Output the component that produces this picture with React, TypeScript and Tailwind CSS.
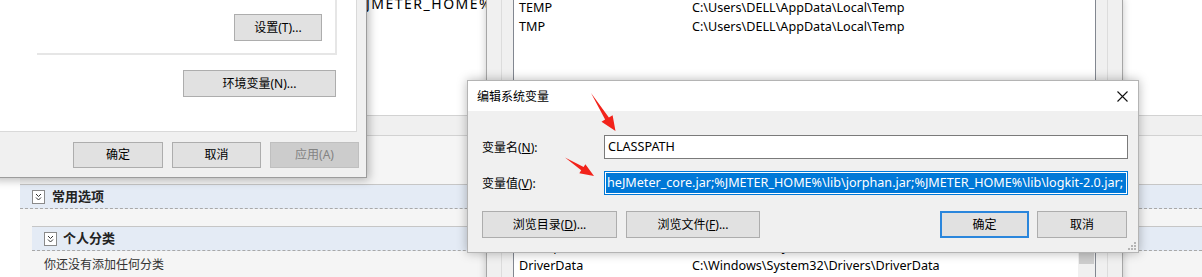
import React from 'react';

const FONT = "font-['Noto_Sans','Noto_Sans_CJK_SC',sans-serif]";

type Variant = 'normal' | 'default' | 'disabled';

function WinButton({ children, className = '', variant = 'normal' }: { children: React.ReactNode; className?: string; variant?: Variant }) {
    const look =
        variant === 'disabled'
            ? 'border border-[#bfbfbf] bg-[#cccccc] text-[#838383]'
            : variant === 'default'
              ? 'border-2 border-[#2a86dc] bg-[#e1e1e1] text-black'
              : 'border border-[#adadad] bg-[#e1e1e1] text-black';
    return <div className={`flex shrink-0 items-center justify-center text-[12px] ${look} ${className}`}>{children}</div>;
}

function Toggle() {
    return (
        <span className="flex h-[14px] w-[13px] items-center justify-center border border-[#8a8a8a] bg-white">
            <svg width="7" height="8" viewBox="0 0 7 8">
                <path d="M1 1l2.5 2.5L6 1M1 4.5l2.5 2.5L6 4.5" fill="none" stroke="#333" strokeWidth="1" />
            </svg>
        </span>
    );
}

function Row({ name, value }: { name: string; value: string }) {
    return (
        <div className="flex h-[19px] items-center whitespace-nowrap text-[12.6px] text-black">
            <span className="w-[178px] pl-[5px]">{name}</span>
            <span>{value}</span>
        </div>
    );
}

export default function App() {
    return (
        <div className={`relative h-[277px] w-[1202px] overflow-hidden bg-white ${FONT}`}>
            {/* page behind the windows */}
            <div className="flex h-full flex-col">
                <div className="h-[115px] shrink-0 bg-white" />
                <div className="h-[21px] shrink-0 border-y border-[#d2d2d2] bg-[#f0f0f0]" />
                <div className="ml-[20px] flex flex-1 flex-col bg-[#f5f5f5] pt-[48px]">
                    <div className="flex h-[25px] items-center gap-[7px] border-y border-t-[#c6c6c6] border-b-[#a8a8a8] bg-[#e4ebf5] pl-[12px] [border-bottom-style:dashed]">
                        <Toggle />
                        <span className="text-[13px] font-bold text-[#222]">常用选项</span>
                    </div>
                    <div className="ml-[12px] mt-[17px] flex h-[25px] items-center gap-[6px] border-y border-t-[#c6c6c6] border-b-[#a8a8a8] bg-[#e4ebf5] pl-[12px] [border-bottom-style:dashed]">
                        <Toggle />
                        <span className="text-[13px] font-bold text-[#222]">个人分类</span>
                    </div>
                    <div className="flex h-[28px] items-center pl-[24px] text-[12px] text-[#333]">你还没有添加任何分类</div>
                </div>
            </div>

            {/* list text of a window further back */}
            <div className="absolute left-[366px] top-[-5px] w-[120px] overflow-hidden whitespace-nowrap text-[14px] leading-[17px] tracking-[1.5px] text-black">
                JMETER_HOME%\lib
            </div>

            {/* 环境变量 window */}
            <div className="absolute left-[486px] top-[-2px] h-[300px] w-[637px] border-x border-[#a6a6a6] bg-[#f0f0f0] px-[14px] shadow-[0_0_8px_rgba(0,0,0,0.22)]">
                <div className="flex h-full flex-col border-x border-[#dcdcdc] px-[11px]">
                    <div className="h-[142px] border-x border-b border-[#828790] bg-white pt-[1px]">
                        <Row name="TEMP" value={String.raw`C:\Users\DELL\AppData\Local\Temp`} />
                        <Row name="TMP" value={String.raw`C:\Users\DELL\AppData\Local\Temp`} />
                    </div>
                    <div className="mt-[60px] flex flex-1 border border-[#828790] bg-white">
                        <div className="flex-1 pt-[37px]">
                            <Row name="ComSpec" value={String.raw`C:\WINDOWS\system32\cmd.exe`} />
                            <Row name="DriverData" value={String.raw`C:\Windows\System32\Drivers\DriverData`} />
                        </div>
                        <div className="w-[17px] bg-[#f0f0f0] pt-[52px]">
                            <div className="mx-[1px] h-[11px] bg-[#cdcdcd]" />
                        </div>
                    </div>
                </div>
            </div>

            {/* 系统属性 window */}
            <div className="absolute left-[-10px] top-[-20px] flex h-[198px] w-[377px] flex-col border border-[#9c9c9c] bg-[#f0f0f0] shadow-[2px_2px_9px_rgba(0,0,0,0.28)]">
                <div className="mr-[9px] flex h-[151px] flex-col items-end border border-[#d9d9d9] bg-white">
                    <div className="mr-[19px] flex h-[73px] w-[300px] items-end justify-end border-b-2 border-r-2 border-[#e6e6e6] pb-[12px] pr-[13px]">
                        <WinButton className="h-[27px] w-[88px]">设置(T)...</WinButton>
                    </div>
                    <WinButton className="mr-[20px] mt-[15px] h-[27px] w-[153px]">环境变量(N)...</WinButton>
                </div>
                <div className="mr-[7px] mt-[10px] flex justify-end gap-[9px]">
                    <WinButton className="h-[26px] w-[90px]">确定</WinButton>
                    <WinButton className="h-[26px] w-[89px]">取消</WinButton>
                    <WinButton variant="disabled" className="h-[26px] w-[89px]">
                        应用(A)
                    </WinButton>
                </div>
            </div>

            {/* 编辑系统变量 dialog */}
            <div className="absolute left-[467px] top-[80px] flex h-[173px] w-[672px] flex-col border border-[#b4b4b4] bg-[#f0f0f0] shadow-[0_0_10px_rgba(0,0,0,0.28)]">
                <div className="flex h-[30px] shrink-0 items-center justify-between bg-white pl-[9px] pr-[10px] pt-[1px]">
                    <span className="text-[12px] text-black">编辑系统变量</span>
                    <svg width="11" height="11" viewBox="0 0 11 11">
                        <path d="M0.5 0.5l10 10M10.5 0.5l-10 10" stroke="#111" strokeWidth="1.1" />
                    </svg>
                </div>
                <div className="flex flex-1 flex-col pl-[14px] pr-[10px] pt-[24px]">
                    <div className="flex h-[24px] items-center">
                        <span className="w-[122px] pt-[1px] text-[12px] text-black">
                            变量名(<span className="underline">N</span>):
                        </span>
                        <div className="flex h-[24px] w-[524px] items-center border border-[#7a7a7a] bg-white pl-[3px] text-[12.6px] text-black">
                            CLASSPATH
                        </div>
                    </div>
                    <div className="mt-[12px] flex h-[24px] items-center">
                        <span className="w-[122px] pt-[1px] text-[12px] text-black">
                            变量值(<span className="underline">V</span>):
                        </span>
                        <div className="flex h-[24px] w-[524px] items-center overflow-hidden border border-[#0078d7] bg-white px-[1px]">
                            <span className="flex h-[20px] flex-1 items-center overflow-hidden whitespace-nowrap bg-[#0078d7] pl-[1px] text-[12.6px] text-white">
                                {String.raw`heJMeter_core.jar;%JMETER_HOME%\lib\jorphan.jar;%JMETER_HOME%\lib\logkit-2.0.jar;`}
                            </span>
                        </div>
                    </div>
                    <div className="mt-[16px] flex justify-between">
                        <div className="flex gap-[9px]">
                            <WinButton className="h-[27px] w-[135px]">
                                浏览目录(<span className="underline">D</span>)...
                            </WinButton>
                            <WinButton className="h-[27px] w-[134px]">
                                浏览文件(<span className="underline">F</span>)...
                            </WinButton>
                        </div>
                        <div className="mr-[1px] flex gap-[8px]">
                            <WinButton variant="default" className="h-[27px] w-[89px]">
                                确定
                            </WinButton>
                            <WinButton className="h-[27px] w-[90px]">取消</WinButton>
                        </div>
                    </div>
                </div>
                <svg className="absolute bottom-[2px] right-[2px]" width="9" height="9" viewBox="0 0 9 9">
                    <g fill="#b5b5b5">
                        <rect x="7" y="1" width="2" height="2" />
                        <rect x="4" y="4" width="2" height="2" />
                        <rect x="7" y="4" width="2" height="2" />
                        <rect x="1" y="7" width="2" height="2" />
                        <rect x="4" y="7" width="2" height="2" />
                        <rect x="7" y="7" width="2" height="2" />
                    </g>
                </svg>
            </div>

            {/* red pointer arrows */}
            <svg className="pointer-events-none absolute left-0 top-0" width="1202" height="277">
                <polygon points="591,93 608.9,117.4 612.6,115.2 615.5,131 601.5,121.8 605.1,119.5" fill="#f2231b" />
                <polygon points="565,157.5 583.6,167.0 585.4,164.3 594,176 579.3,173.2 581.2,170.3" fill="#f2231b" />
            </svg>
        </div>
    );
}
